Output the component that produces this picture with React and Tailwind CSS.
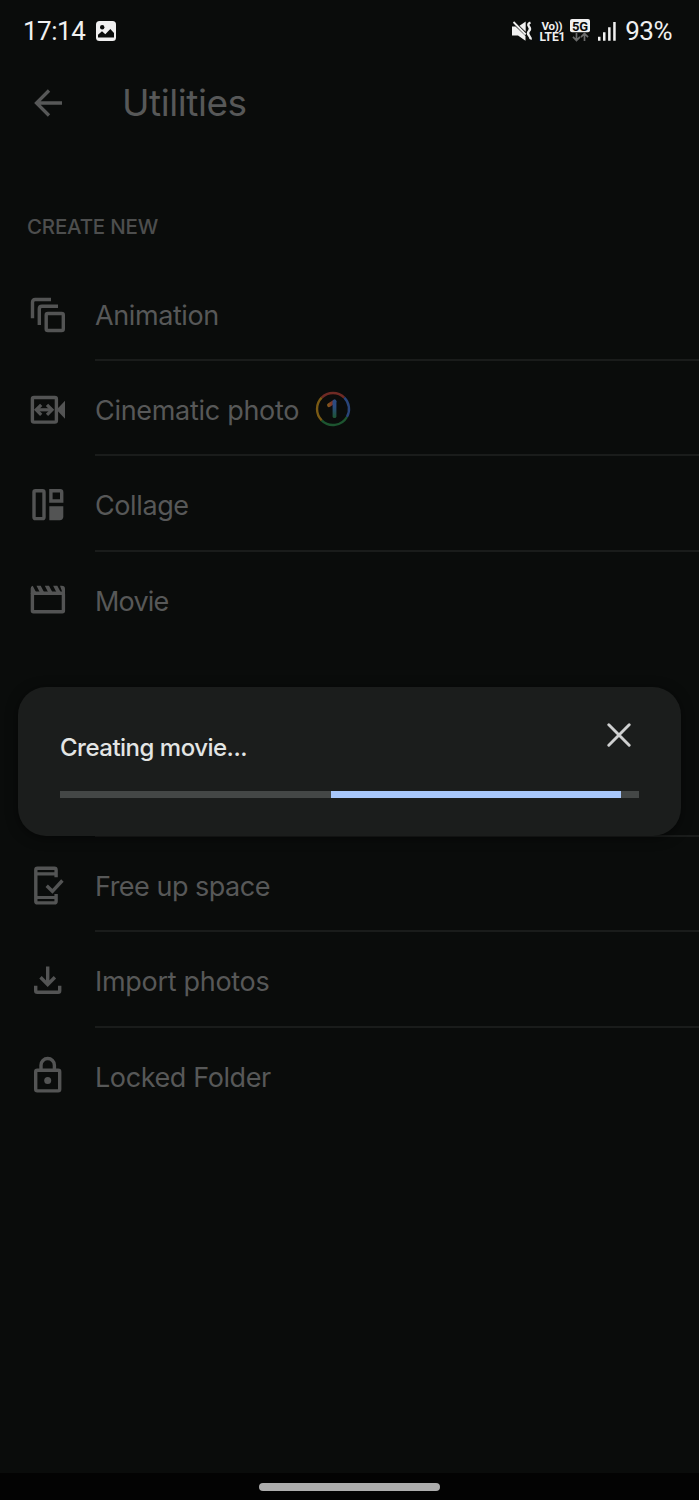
const iconClass = "w-10 h-11 shrink-0 text-[#535454]";
const rowText = "font-[Inter] text-[27px] leading-none text-[#575858]";

function Icon({ children }) {
  return (
    <svg viewBox="0 -2 40 44" className={iconClass} fill="none" stroke="currentColor" strokeWidth="3.4">
      {children}
    </svg>
  );
}

function AnimationIcon() {
  return (
    <Icon>
      <path d="M4.5 24.3V8.2q0-2.7 2.7-2.7H23" />
      <path d="M11.3 31V15q0-2.7 2.7-2.7H30" />
      <rect x="18.2" y="19.5" width="17.1" height="17" rx="1.6" />
    </Icon>
  );
}

function CinematicIcon() {
  return (
    <Icon>
      <rect x="4.4" y="8.5" width="24" height="24.6" rx="1.6" />
      <path d="M28.5 20.8l8.5-9v18z" fill="currentColor" stroke="none" />
      <path d="M10 20.8h13" strokeWidth="3.2" />
      <path d="M13.2 15.8l-5 5 5 5M19 15.8l5 5-5 5" strokeWidth="3.2" />
    </Icon>
  );
}

function CollageIcon() {
  return (
    <Icon>
      <rect x="6" y="6.8" width="10" height="27.8" rx="1.4" />
      <path d="M22.9 6.8h9.2q1.6 0 1.6 1.6v8.6H22.9z" />
      <path d="M21.3 22.2h14v10.4q0 3.6-3.6 3.6H21.3z" fill="currentColor" stroke="none" />
    </Icon>
  );
}

function MovieIcon() {
  return (
    <Icon>
      <rect x="4.4" y="14.3" width="31" height="18.4" rx="1" />
      <path
        d="M2.7 15V9.5q0-2.2 2-2.8l3.7 7H12L8.5 6.7h4.2l3.7 7h4L16.800 6.700H21l3.700 7h4l-3.600-7h4.200l3.700 7h1.500l-2.500-7h1.700q3.300 0 3.300 3.300v5z"
        fill="currentColor"
        stroke="none"
      />
    </Icon>
  );
}

function FreeUpIcon() {
  return (
    <Icon>
      <path d="M28.1 12.3V5q0-1.7-1.7-1.7H9.5q-1.7 0-1.7 1.7v31.2q0 1.7 1.7 1.7h16.9q1.7 0 1.7-1.7V29" />
      <path d="M8 8.8h20M8 32.5h20" strokeWidth="3.2" />
      <path d="M18.7 20.8l5.7 5.5 10-10.8" />
    </Icon>
  );
}

function ImportIcon() {
  return (
    <Icon>
      <path d="M19.7 6.4V24M12.5 17.3l7.2 7.2 7.2-7.2" />
      <path d="M7.7 25.7v5q0 1.6 1.6 1.6h20.8q1.6 0 1.6-1.6v-5" />
    </Icon>
  );
}

function LockIcon() {
  return (
    <Icon>
      <rect x="7.7" y="15.2" width="24" height="20.7" rx="1.6" />
      <path d="M13 15v-4.8a6.7 6.7 0 0 1 13.4 0V15" />
      <circle cx="19.7" cy="25.5" r="3.5" fill="currentColor" stroke="none" />
    </Icon>
  );
}

function OneBadge() {
  return (
    <svg viewBox="0 0 36 36" className="ml-4 mb-1 size-9 shrink-0" fill="none" strokeWidth="2.4">
      <defs>
        <linearGradient id="one" x1="12" y1="0" x2="22" y2="0" gradientUnits="userSpaceOnUse">
          <stop offset="0" stopColor="#86621a" />
          <stop offset="0.5" stopColor="#7c3028" />
          <stop offset="0.8" stopColor="#2b4a80" />
        </linearGradient>
        <linearGradient id="stem" x1="0" y1="8" x2="0" y2="27" gradientUnits="userSpaceOnUse">
          <stop offset="0.4" stopColor="#2b4a80" />
          <stop offset="1" stopColor="#1d5530" />
        </linearGradient>
      </defs>
      <path d="M6.7 6.7A16 16 0 0 1 29.3 6.7" stroke="#6e2a24" />
      <path d="M29.3 6.7A16 16 0 0 1 31.9 26" stroke="#29457a" />
      <path d="M31.9 26A16 16 0 0 1 6.7 29.3" stroke="#1d5530" />
      <path d="M6.7 29.3A16 16 0 0 1 6.7 6.7" stroke="#7a5a14" />
      <path d="M14 14.2l5.5-3.7" stroke="url(#one)" strokeWidth="3.8" strokeLinecap="round" />
      <path d="M19.5 10.5v14.7" stroke="url(#stem)" strokeWidth="3.8" strokeLinecap="round" />
    </svg>
  );
}

function Row({ icon, label, tracking, badge, last }) {
  return (
    <div className="flex h-[95.2px] items-center pl-7">
      {icon}
      <div className={`ml-[27px] flex h-full flex-1 items-center pt-1.5 border-b-2 ${last ? "border-transparent" : "border-[#1a1c1b]"}`}>
        <span className={`${rowText} ${tracking}`}>{label}</span>
        {badge}
      </div>
    </div>
  );
}

function StatusBar() {
  return (
    <div className="flex h-[62px] items-center pl-[23px] pr-[27px] font-[Roboto] text-[#f0f0f0]">
      <span className="text-[26px] leading-none tracking-[-0.5px]">17:14</span>
      <svg viewBox="0 0 20 20" className="ml-[11px] size-5">
        <rect width="20" height="20" rx="3.5" fill="#f0f0f0" />
        <circle cx="6.2" cy="6.2" r="2.2" fill="#0a0c0b" />
        <path d="M2 16.500v-2.800l4-3.400 3.300 3 5-5.300 3.700 4v4.500z" fill="#0a0c0b" />
      </svg>
      <svg viewBox="0 0 108 26" className="ml-auto h-[26px] w-[108px]" fill="#f0f0f0">
        {/* muted speaker with vibration marks */}
        <path d="M1 8.5h3.5l10 9.5v4.8L7 17.500H1z" />
        <path d="M14.7 3.5v10.2L8.5 7.700z" />
        <path d="M2.5 4l12.2 12.5" stroke="#f0f0f0" strokeWidth="1.8" />
        <path d="M19.5 4.500q-3.500 1.500-1.500 4t0 4.500 0 4.500 1.500 4" fill="none" stroke="#f0f0f0" strokeWidth="2.4" />
        <text x="30.5" y="11.7" fontSize="11.5" fontWeight="700" fontFamily="Roboto" textLength="21">Vo))</text>
        <text x="28.5" y="23.3" fontSize="12" fontWeight="700" fontFamily="Roboto" textLength="26">LTE1</text>
        <rect x="59" y="1" width="20" height="13.3" rx="2" />
        <text x="61" y="12.5" fontSize="13" fontWeight="700" fontFamily="Roboto" fill="#0a0c0b" textLength="16">5G</text>
        <path d="M65.5 15v7M62 18.800l3.500 3.700 3.500-3.700M73.500 23v-7M70 19.200l3.500-3.700 3.500 3.700" fill="none" stroke="#6b6c6c" strokeWidth="1.7" />
        <path d="M87 18.7h2.5v4H87zM92 14.300h2.500v8.400H92zM97.100 9.300h2.500v13.400h-2.500zM102.200 4h2.500v18.700h-2.500z" />
      </svg>
      <span className="ml-1.5 text-[26px] leading-none tracking-[-0.5px]">93%</span>
    </div>
  );
}

function ProgressDialog() {
  return (
    <div className="absolute left-[18px] top-[687px] h-[149px] w-[663px] rounded-[28px] bg-[#1b1d1c] px-[42px] shadow-[0_2px_12px_rgba(0,0,0,0.5)]">
      <div className="flex h-[104px] justify-between">
        <span className="mt-[47px] font-[Inter] text-[24px] font-medium leading-7 tracking-[-0.5px] text-[#e3e5e4]">Creating movie...</span>
        <svg viewBox="0 0 24 24" className="mr-2 mt-9 size-6" fill="none" stroke="#cfd0d0" strokeWidth="2.9" strokeLinecap="round">
          <path d="M1.8 1.8l20.4 20.4M22.2 1.8L1.8 22.2" />
        </svg>
      </div>
      <div className="h-[7px] bg-[#444746]">
        <div className="ml-[271px] h-full w-[290px] bg-[#a8c7fa]" />
      </div>
    </div>
  );
}

export default function App() {
  return (
    <div className="relative flex h-[1500px] w-[699px] flex-col overflow-hidden bg-[#0a0c0b]">
      <StatusBar />

      <div className="flex h-[82px] items-center pl-[34px]">
        <svg viewBox="0 0 28 28" className="size-7 text-[#575858]" fill="none" stroke="currentColor" strokeWidth="3.3">
          <path d="M28 14H3M15 1.5L2.5 14 15 26.5" />
        </svg>
        <h1 className="ml-[60px] pb-0.5 font-[Inter] text-[37px] leading-none tracking-[-0.45px] text-[#575858]">Utilities</h1>
      </div>

      <div className="flex h-[122px] items-end pb-7 pl-[27px]">
        <h2 className="font-[Inter] text-[20.5px] font-medium leading-[22px] tracking-[-0.2px] text-[#4d4e4e]">CREATE NEW</h2>
      </div>

      <Row icon={<AnimationIcon />} label="Animation" tracking="tracking-[-0.4px]" />
      <Row icon={<CinematicIcon />} label="Cinematic photo" tracking="tracking-[-0.3px]" badge={<OneBadge />} />
      <Row icon={<CollageIcon />} label="Collage" tracking="tracking-[-0.4px]" />
      <Row icon={<MovieIcon />} label="Movie" tracking="tracking-[-0.8px]" last />

      <div className="ml-[95px] h-[190.4px] border-b-2 border-[#1a1c1b]" />

      <Row icon={<FreeUpIcon />} label="Free up space" tracking="tracking-[-0.5px]" />
      <Row icon={<ImportIcon />} label="Import photos" tracking="tracking-[-0.3px]" />
      <Row icon={<LockIcon />} label="Locked Folder" tracking="tracking-[-0.4px]" last />

      <div className="mt-auto flex h-[27px] justify-center bg-[#030303] pt-2.5">
        <div className="h-2 w-[181px] rounded-full bg-[#adadad]" />
      </div>

      <ProgressDialog />
    </div>
  );
}
